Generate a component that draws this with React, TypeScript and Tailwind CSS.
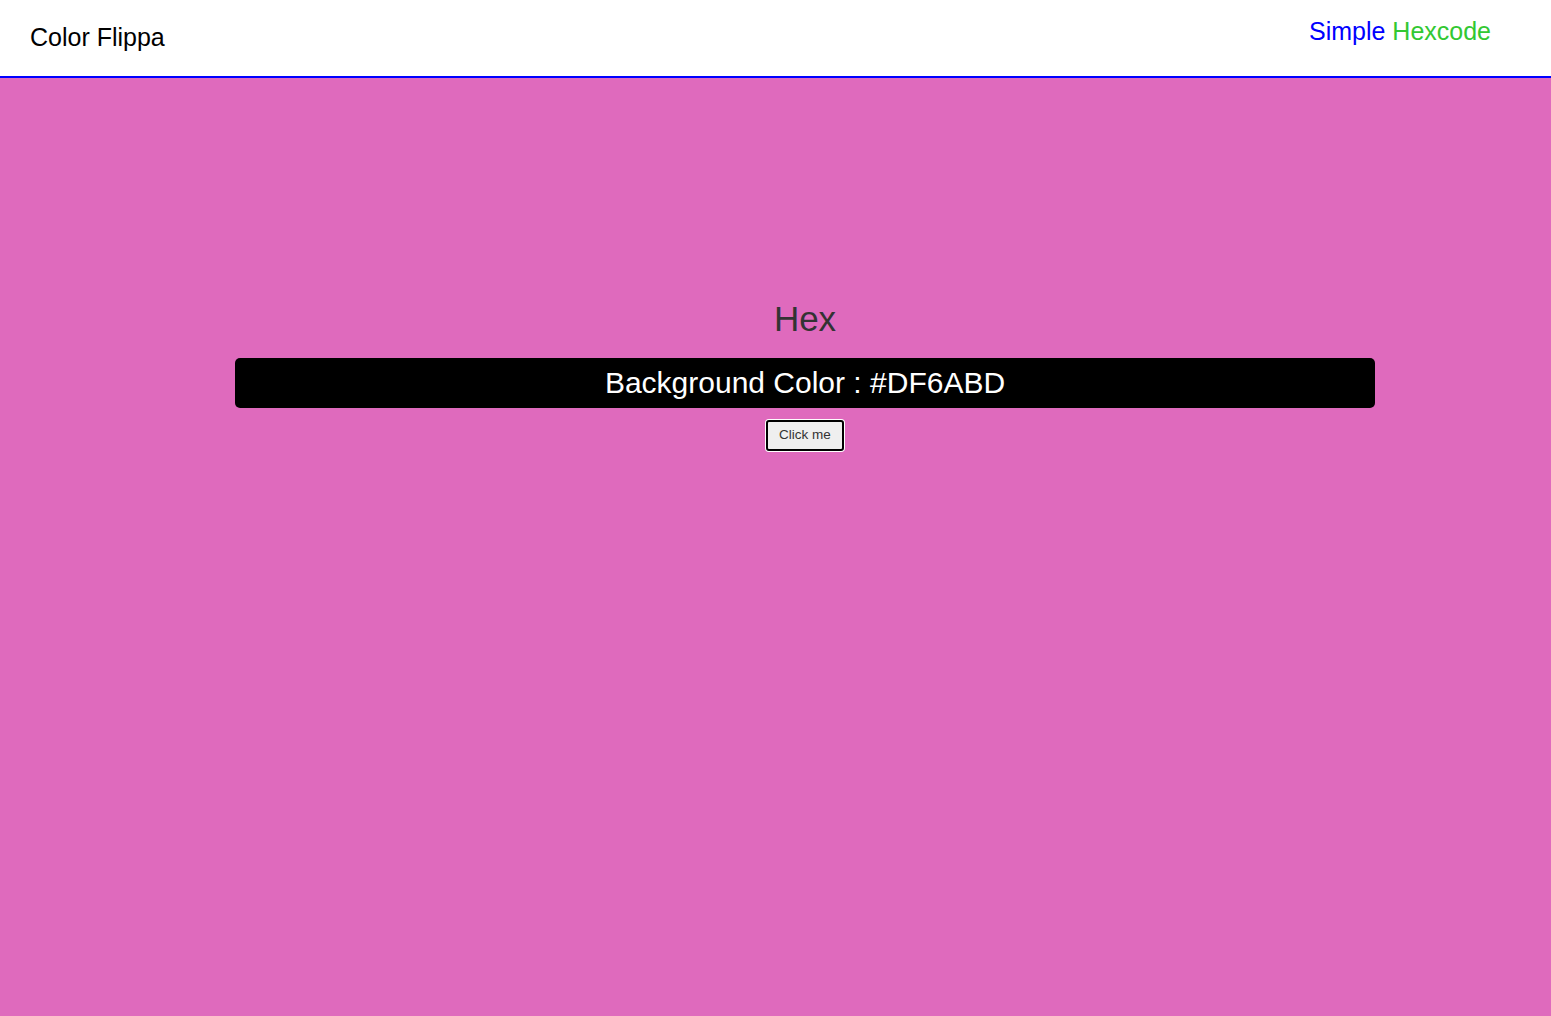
import React from "react"

export default function App() {
  return (
    <div className="min-h-[1016px] bg-[#DF6ABD] font-['Liberation_Sans',Arial,sans-serif]">
      <nav className="flex h-[78px] items-start justify-between border-b-2 border-[#0000ff] bg-white">
        <div className="pl-[30px] pt-[22px] text-[25px] leading-[30px] text-black">
          Color Flippa
        </div>
        <div className="pr-[60px] pt-[16px] text-[25px] leading-[30px]">
          <span className="text-[#0000ff]">Simple</span>{" "}
          <span className="text-[#32c832]">Hexcode</span>
        </div>
      </nav>

      <main className="flex justify-center pl-[59px] pt-[220px]">
        <div className="flex w-[1140px] flex-col items-center">
          <h1 className="text-[35px] leading-[42px] text-[#333333]">Hex</h1>
          <div className="mt-[18px] flex h-[50px] w-full items-center justify-center rounded-[5px] bg-black">
            <span className="text-[30px] leading-[36px] text-white">
              Background Color : #DF6ABD
            </span>
          </div>
          <div className="mt-[11px] rounded-[4px] bg-white p-[1px]">
            <button className="h-[31px] w-[78px] rounded-[3px] border-2 border-black bg-[#efefef] text-[13.5px] text-[#333]">
              Click me
            </button>
          </div>
        </div>
      </main>
    </div>
  )
}
